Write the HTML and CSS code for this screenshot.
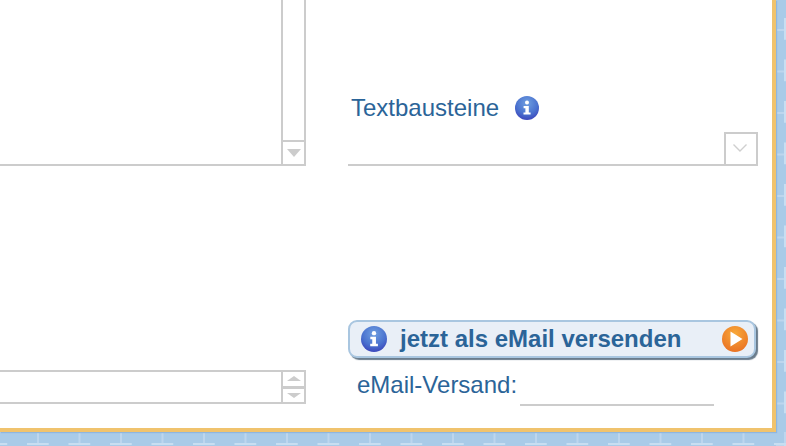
FILE: index.html
```html
<!DOCTYPE html>
<html lang="de">
<head>
<meta charset="utf-8">
<title>eMail-Versand</title>
<link rel="stylesheet" href="styles.css">
</head>
<body>
<main class="panel">
  <section class="left">
    <div class="textarea">
      <div class="scrollbar">
        <div class="track"></div>
        <div class="arrow-box"><span class="tri tri-down"></span></div>
      </div>
    </div>
    <div class="number-input">
      <div class="spinner">
        <div class="spin spin-up"><span class="tri-small tri-up"></span></div>
        <div class="spin spin-down"><span class="tri-small tri-down-small"></span></div>
      </div>
    </div>
  </section>
  <section class="right">
    <div class="label-row">
      <span class="label">Textbausteine</span>
      <svg class="info" width="24" height="24" viewBox="0 0 24 24" aria-hidden="true">
        <defs>
          <radialGradient id="ig1" cx="50%" cy="30%" r="75%">
            <stop offset="0" stop-color="#6f9fe0"/>
            <stop offset="0.6" stop-color="#4a72cf"/>
            <stop offset="1" stop-color="#3a3fb8"/>
          </radialGradient>
        </defs>
        <circle cx="12" cy="12" r="12" fill="url(#ig1)"/>
        <circle cx="12" cy="6.6" r="2" fill="#fff"/>
        <path d="M8.6 10h5.2v6.4h1.8v2.2H8.5v-2.2h1.9v-4.2H8.6z" fill="#fff"/>
      </svg>
    </div>
    <div class="select">
      <div class="select-btn">
        <svg class="chevron" width="16" height="10" viewBox="0 0 16 10" aria-hidden="true"><path d="M1.5 1.5L8 8l6.5-6.5" fill="none" stroke="#cfcfcf" stroke-width="1.4"/></svg>
      </div>
    </div>
    <button class="send" type="button">
      <svg class="info" width="26" height="26" viewBox="0 0 24 24" aria-hidden="true">
        <circle cx="12" cy="12" r="12" fill="url(#ig1)"/>
        <circle cx="12" cy="6.6" r="2" fill="#fff"/>
        <path d="M8.6 10h5.2v6.4h1.8v2.2H8.5v-2.2h1.9v-4.2H8.6z" fill="#fff"/>
      </svg>
      <span class="send-text">jetzt als eMail versenden</span>
      <svg class="play" width="26" height="26" viewBox="0 0 26 26" aria-hidden="true">
        <defs>
          <radialGradient id="og1" cx="50%" cy="30%" r="75%">
            <stop offset="0" stop-color="#f8a93a"/>
            <stop offset="1" stop-color="#e96f22"/>
          </radialGradient>
        </defs>
        <circle cx="13" cy="13" r="13" fill="url(#og1)"/>
        <path d="M8.5 5.5L20.5 13 8.5 20.5z" fill="#fff"/>
      </svg>
    </button>
    <div class="email-row">
      <span class="label">eMail-Versand:</span>
      <div class="email-input"></div>
    </div>
  </section>
</main>
</body>
</html>
```
FILE: styles.css
```css
* { box-sizing: border-box; }
html, body { margin: 0; height: 100%; }
body {
  width: 786px;
  height: 446px;
  overflow: hidden;
  background-color: #a9cbe8;
  background-image:
    linear-gradient(90deg, #c8deF1 22px, transparent 22px),
    linear-gradient(90deg, #bdd6ee 2px, transparent 2px),
    linear-gradient(#c8deF1 22px, transparent 22px),
    linear-gradient(#bdd6ee 2px, transparent 2px);
  background-size: 41.5px 2px, 41.5px 11px, 2px 41.5px, 9px 41.5px;
  background-position: 27px 443px, 37px 432px, 784px 18px, 776px 29px;
  background-repeat: repeat-x, repeat-x, repeat-y, repeat-y;
  font-family: "Liberation Sans", Arial, sans-serif;
  color: #2b6498;
}
.panel {
  display: flex;
  width: 776px;
  height: 432px;
  background: #fff;
  border-right: 4px solid #f0c36d;
  border-bottom: 4px solid #f0c36d;
  box-shadow: 1px 1px 1px #8fb6de;
}
.left { width: 306px; display: flex; flex-direction: column; flex: none; }
.textarea {
  height: 166px;
  border-right: 2px solid #ccc;
  border-bottom: 2px solid #ccc;
  display: flex;
  justify-content: flex-end;
}
.scrollbar {
  width: 23px;
  border-left: 2px solid #ccc;
  display: flex;
  flex-direction: column;
}
.track { flex: 1; }
.arrow-box {
  height: 24px;
  border-top: 2px solid #ccc;
  display: flex;
  align-items: center;
  justify-content: center;
}
.tri {
  width: 0; height: 0;
  border-left: 7px solid transparent;
  border-right: 7px solid transparent;
  border-top: 8px solid #ccc;
}
.number-input {
  margin-top: 204px;
  height: 34px;
  border-top: 2px solid #ccc;
  border-right: 2px solid #ccc;
  border-bottom: 2px solid #ccc;
  display: flex;
  justify-content: flex-end;
}
.spinner { width: 23px; border-left: 2px solid #ccc; display: flex; flex-direction: column; }
.spin { flex: 1; display: flex; align-items: center; justify-content: center; }
.spin-up { border-bottom: 3px solid #ccc; }
.tri-small { width: 0; height: 0; border-left: 7px solid transparent; border-right: 7px solid transparent; }
.tri-up { border-bottom: 5px solid #ccc; }
.tri-down-small { border-top: 5px solid #ccc; }
.right { width: 410px; margin-left: 42px; flex: none; display: flex; flex-direction: column; }
.label-row { display: flex; align-items: center; height: 24px; margin-top: 96px; padding-left: 3px; }
.label { font-size: 24px; line-height: 24px; color: #2b6498; }
.label-row .info { margin-left: 16px; }
.select {
  margin-top: 12px;
  height: 34px;
  border-bottom: 2px solid #ccc;
  display: flex;
  justify-content: flex-end;
}
.select-btn {
  width: 34px;
  border: 2px solid #ccc;
  border-bottom: 0;
  display: flex;
  align-items: center;
  justify-content: center;
}
.chevron { margin: 0 2px 2px 0; }
.send {
  margin-top: 154px;
  height: 38px;
  width: 408px;
  padding: 0 6px 0 11px;
  display: flex;
  align-items: center;
  background: #e9eff7;
  border: 2px solid #a9c6e0;
  border-radius: 9px;
  box-shadow: 2px 2px 1px #6a7c8c;
  font-family: inherit;
}
.send-text {
  margin-left: 13px;
  font-weight: 700;
  font-size: 24px;
  color: #2b6498;
  flex: 1;
  text-align: left;
}
.email-row { display: flex; margin-top: 15px; padding-left: 9px; align-items: flex-start; }
.email-input { width: 194px; height: 33px; margin-left: 3px; border-bottom: 2px solid #ccc; }
```
